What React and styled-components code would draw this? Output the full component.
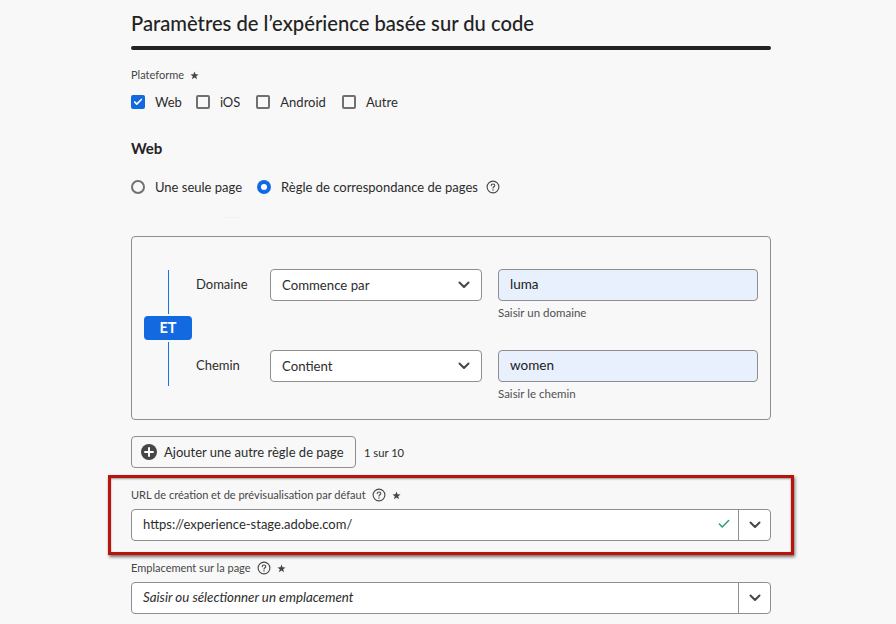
import React from "react";
import styled, { createGlobalStyle } from "styled-components";
import { Check } from "lucide-react";

const GlobalStyle = createGlobalStyle`
  html, body {
    margin: 0;
    height: 100%;
    background: #f8f8f8;
    overflow: hidden;
  }
  body {
    font-family: "Lato", "Open Sans", sans-serif;
    color: #2c2c2c;
  }
`;

const Page = styled.div`
  width: 640px;
  height: 624px;
  margin-left: 131px;
  display: flex;
  flex-direction: column;
`;

const Title = styled.h1`
  margin: 0;
  height: 46px;
  padding-top: 11px;
  box-sizing: border-box;
  font-size: 20.2px;
  line-height: 24px;
  font-weight: 500;
  color: #222;
  white-space: nowrap;
`;

const Rule = styled.div`
  height: 4px;
  border-radius: 2px;
  background: #222;
`;

const FieldLabel = styled.div`
  display: flex;
  align-items: center;
  gap: 6px;
  height: 16px;
  margin-top: ${(p) => p.$top || 0}px;
  font-size: 11px;
  line-height: 16px;
  color: #464646;
  white-space: nowrap;
`;

const OptionRow = styled.div`
  display: flex;
  align-items: center;
  height: 20px;
  margin-top: ${(p) => p.$top}px;
  font-size: 13px;
  color: #2c2c2c;
  white-space: nowrap;
`;

const CheckBox = styled.span`
  width: 14px;
  height: 14px;
  box-sizing: border-box;
  border-radius: 2px;
  border: 2px solid ${(p) => (p.$on ? "#1269e0" : "#707070")};
  background: ${(p) => (p.$on ? "#1269e0" : "transparent")};
  display: flex;
  align-items: center;
  justify-content: center;
  color: #fff;
`;

const OptionText = styled.span`
  margin-left: ${(p) => p.$left}px;
  margin-right: ${(p) => p.$right}px;
`;

const Radio = styled.span`
  width: 14px;
  height: 14px;
  box-sizing: border-box;
  border-radius: 50%;
  border: ${(p) => (p.$on ? "4.5px solid #1269e0" : "2px solid #707070")};
  background: ${(p) => (p.$on ? "#fff" : "transparent")};
`;

const SectionTitle = styled.h2`
  margin: 26px 0 0;
  height: 20px;
  font-size: 15px;
  line-height: 20px;
  font-weight: 700;
  color: #222;
`;

const FaintMark = styled.div`
  width: 16px;
  height: 1px;
  margin: 20px 0 0 93px;
  background: #f1f1f1;
`;

const RuleBox = styled.div`
  margin-top: 18px;
  height: 184px;
  box-sizing: border-box;
  border: 1px solid #8e8e8e;
  border-radius: 4px;
  padding: 32px 12px 0 12px;
  display: grid;
  grid-template-columns: 48px 1fr;
`;

const Connector = styled.div`
  display: flex;
  flex-direction: column;
  align-items: center;
  height: 116px;
  margin-top: 1px;
`;

const ConnectorLine = styled.div`
  flex: 1;
  width: 1px;
  background: #1473e6;
`;

const AndBadge = styled.div`
  width: 48px;
  height: 24px;
  margin: 2px 0;
  border-radius: 4px;
  background: #1269e0;
  color: #fff;
  font-size: 14.5px;
  font-weight: 700;
  line-height: 24px;
  text-align: center;
`;

const Conditions = styled.div`
  display: flex;
  flex-direction: column;
  gap: 30px;
`;

const Condition = styled.div`
  display: grid;
  grid-template-columns: 74px 212px 260px;
  margin-left: 4px;
`;

const ConditionName = styled.div`
  height: 30px;
  font-size: 13px;
  line-height: 30px;
  color: #2c2c2c;
`;

const SelectBox = styled.div`
  width: 212px;
  height: 32px;
  box-sizing: border-box;
  border: 1px solid #8e8e8e;
  border-radius: 4px;
  background: #fff;
  padding: 0 11px 0 11px;
  display: flex;
  align-items: center;
  justify-content: space-between;
  font-size: 13.2px;
  color: #2c2c2c;
`;

const ValueColumn = styled.div`
  margin-left: 16px;
`;

const ValueBox = styled.div`
  width: 260px;
  height: 32px;
  box-sizing: border-box;
  border: 1px solid #8e8e8e;
  border-radius: 4px;
  background: #e8f0fe;
  padding: 0 11px;
  font-size: 13.5px;
  line-height: 28px;
  color: #1a1a1a;
`;

const HelpText = styled.div`
  margin-top: 4px;
  font-size: 11.5px;
  line-height: 15px;
  color: #505050;
`;

const AddRow = styled.div`
  margin-top: 16px;
  display: flex;
  align-items: center;
  gap: 8px;
  font-size: 11.2px;
  color: #2c2c2c;
`;

const AddButton = styled.div`
  width: 225px;
  height: 32px;
  box-sizing: border-box;
  border: 1px solid #8e8e8e;
  border-radius: 4px;
  padding: 0 0 1px 9px;
  display: flex;
  align-items: center;
  gap: 7px;
  font-size: 13px;
  white-space: nowrap;
`;

const Highlight = styled.div`
  margin: 7px -23px 0;
  height: 80px;
  box-sizing: border-box;
  border: 3px solid #b9140c;
  box-shadow: 1px 2px 3px rgba(0, 0, 0, 0.55), inset 0 1px 2px rgba(0, 0, 0, 0.4);
  padding: 9px 20px 0;
`;

const ComboBox = styled.div`
  margin-top: ${(p) => p.$top}px;
  height: 32px;
  box-sizing: border-box;
  border: 1px solid #8e8e8e;
  border-radius: 4px;
  background: #fff;
  display: flex;
  font-size: 13px;
  color: #2c2c2c;
`;

const ComboValue = styled.div`
  flex: 1;
  padding: 0 0 2px 11px;
  display: flex;
  align-items: center;
  justify-content: space-between;
  font-style: ${(p) => (p.$placeholder ? "italic" : "normal")};
  font-size: ${(p) => (p.$placeholder ? 13.3 : 13)}px;
`;

const ValidIcon = styled.span`
  display: flex;
  margin-right: 7px;
  color: #2d9d78;
`;

const ComboToggle = styled.div`
  width: 31px;
  border-left: 1px solid #8e8e8e;
  display: flex;
  align-items: center;
  justify-content: center;
`;

const Help = () => (
  <svg width="14" height="14" viewBox="0 0 14 14" fill="none">
    <circle cx="7" cy="7" r="5.9" stroke="#464646" strokeWidth="1.1" />
    <path
      d="M5.2 5.6c0-1 .8-1.6 1.8-1.6s1.8.6 1.8 1.5c0 1.3-1.8 1.3-1.8 2.6"
      stroke="#464646"
      strokeWidth="1.1"
      strokeLinecap="round"
    />
    <circle cx="7" cy="10" r=".75" fill="#464646" />
  </svg>
);

const Star = () => (
  <svg width="9" height="9" viewBox="0 0 8 8">
    <path d="M4 .4l.95 2.55 2.7.1-2.12 1.68.73 2.6L4 5.85 1.74 7.33l.73-2.6L.35 3.05l2.7-.1z" fill="#464646" />
  </svg>
);

const Plus = () => (
  <svg width="16" height="16" viewBox="0 0 16 16">
    <circle cx="8" cy="8" r="8" fill="#464646" />
    <path d="M8 4v8M4 8h8" stroke="#fff" strokeWidth="2" strokeLinecap="round" />
  </svg>
);

const Chevron = () => (
  <svg width="12" height="8" viewBox="0 0 12 8" fill="none">
    <path d="M1.5 1.5L6 6l4.5-4.5" stroke="#464646" strokeWidth="2" strokeLinecap="round" strokeLinejoin="round" />
  </svg>
);

const platforms = [
  { name: "Web", on: true, right: 14 },
  { name: "iOS", right: 16 },
  { name: "Android", right: 16 },
  { name: "Autre", right: 0 },
];

const conditions = [
  { name: "Domaine", op: "Commence par", value: "luma", help: "Saisir un domaine" },
  { name: "Chemin", op: "Contient", value: "women", help: "Saisir le chemin" },
];

export default function App() {
  return (
    <Page>
      <GlobalStyle />
      <Title>Paramètres de l’expérience basée sur du code</Title>
      <Rule />

      <FieldLabel $top={17}>
        Plateforme <Star />
      </FieldLabel>
      <OptionRow $top={9}>
        {platforms.map((p) => (
          <React.Fragment key={p.name}>
            <CheckBox $on={p.on}>
              {p.on && <Check size={12} strokeWidth={4} />}
            </CheckBox>
            <OptionText $left={10} $right={p.right}>
              {p.name}
            </OptionText>
          </React.Fragment>
        ))}
      </OptionRow>

      <SectionTitle>Web</SectionTitle>
      <OptionRow $top={19}>
        <Radio />
        <OptionText $left={10} $right={15}>
          Une seule page
        </OptionText>
        <Radio $on />
        <OptionText $left={10} $right={8}>
          Règle de correspondance de pages
        </OptionText>
        <Help />
      </OptionRow>
      <FaintMark />

      <RuleBox>
        <Connector>
          <ConnectorLine />
          <AndBadge>ET</AndBadge>
          <ConnectorLine />
        </Connector>
        <Conditions>
          {conditions.map((c) => (
            <Condition key={c.name}>
              <ConditionName>{c.name}</ConditionName>
              <SelectBox>
                {c.op}
                <Chevron />
              </SelectBox>
              <ValueColumn>
                <ValueBox>{c.value}</ValueBox>
                <HelpText>{c.help}</HelpText>
              </ValueColumn>
            </Condition>
          ))}
        </Conditions>
      </RuleBox>

      <AddRow>
        <AddButton>
          <Plus />
          Ajouter une autre règle de page
        </AddButton>
        1 sur 10
      </AddRow>

      <Highlight>
        <FieldLabel>
          URL de création et de prévisualisation par défaut <Help /> <Star />
        </FieldLabel>
        <ComboBox $top={6}>
          <ComboValue>
            https://experience-stage.adobe.com/
            <ValidIcon>
              <Check size={14} strokeWidth={2.6} />
            </ValidIcon>
          </ComboValue>
          <ComboToggle>
            <Chevron />
          </ComboToggle>
        </ComboBox>
      </Highlight>

      <FieldLabel $top={5}>
        Emplacement sur la page <Help /> <Star />
      </FieldLabel>
      <ComboBox $top={6}>
        <ComboValue $placeholder>Saisir ou sélectionner un emplacement</ComboValue>
        <ComboToggle>
          <Chevron />
        </ComboToggle>
      </ComboBox>
    </Page>
  );
}
